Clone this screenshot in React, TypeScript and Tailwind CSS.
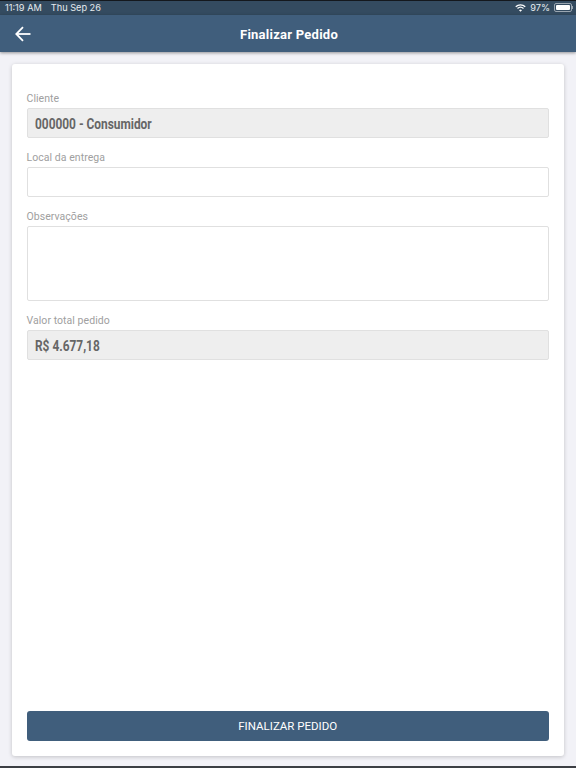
const font = { fontFamily: "Roboto, sans-serif" }

function Field({ label, value, readOnly, area }: { label: string, value?: string, readOnly?: boolean, area?: boolean }) {
  return (
    <div className="flex flex-col">
      <label className="h-[20px] pt-[1px] text-[10.5px] leading-[20px] text-[#a0a0a0] tracking-[0.05px]">{label}</label>
      <div className={`${area ? "h-[75px]" : "h-[30px]"} ${readOnly ? "bg-[#eeeeee]" : "bg-white"} border border-[#e0e0e0] rounded-[2px] px-[7.5px] pt-[3px] flex items-center text-[14.5px] font-bold text-[#666666]`}>
        <span className="inline-block origin-left scale-x-[0.82] whitespace-nowrap">{value}</span>
      </div>
    </div>
  )
}

function App() {
  return (
    <div className="w-[576px] h-[768px] flex flex-col bg-[#f2f2f7] overflow-hidden" style={font}>
      <div className="h-[15px] shrink-0 bg-[#344b60] border-t border-[#14181d] flex items-center justify-between pl-[5px] pr-[3px] text-[9.2px] text-[#e6ebef]" style={{ fontFamily: "Inter, sans-serif" }}>
        <div className="flex gap-[9px]">
          <span>11:19 AM</span>
          <span>Thu Sep 26</span>
        </div>
        <div className="flex items-center gap-[4px]">
          <svg width="11" height="8" viewBox="0 0 22 16" fill="none" stroke="white" strokeWidth="2.6">
            <path d="M1.5 5.5a14 14 0 0 1 19 0" />
            <path d="M5 9a9 9 0 0 1 12 0" />
            <path d="M11 15.5l-3-3.2a4.4 4.4 0 0 1 6 0z" fill="white" stroke="none" />
          </svg>
          <span>97%</span>
          <div className="flex items-center">
            <div className="w-[18px] h-[9px] rounded-[2px] border border-[#9aa6b1] p-[1px]">
              <div className="w-full h-full bg-white rounded-[1px]" />
            </div>
            <div className="w-[1px] h-[3px] bg-[#9aa6b1]" />
          </div>
        </div>
      </div>
      <div className="h-[37px] shrink-0 bg-[#405e7c] shadow-[0_1px_3px_rgba(0,0,0,0.4)] relative flex items-center justify-center pt-[2px]">
        <svg className="absolute left-[15px] top-[11px]" width="16" height="16" viewBox="0 0 16 16" fill="none" stroke="white" strokeWidth="1.8">
          <path d="M15.5 8H1.5" />
          <path d="M8 1.2L1.3 8 8 14.8" />
        </svg>
        <span className="text-[13px] font-bold text-white tracking-[0.25px] ml-[2px]">Finalizar Pedido</span>
      </div>
      <div className="flex-1 flex flex-col px-[12px] pt-[12px] pb-[10px]">
        <div className="flex-1 bg-white rounded-[3px] shadow-[0_1px_4px_rgba(0,0,0,0.2)] pl-[14.5px] pr-[15px] pt-[24px] pb-[15px] flex flex-col justify-between">
          <div className="flex flex-col gap-[9px]">
            <Field label="Cliente" value="000000 - Consumidor" readOnly />
            <Field label="Local da entrega" />
            <Field label="Observações" area />
            <Field label="Valor total pedido" value="R$ 4.677,18" readOnly />
          </div>
          <button className="h-[30px] w-full pt-[1px] bg-[#405e7c] rounded-[3px] text-[11.5px] text-white">FINALIZAR PEDIDO</button>
        </div>
      </div>
      <div className="h-[2px] shrink-0 bg-[#3c3f44]" />
    </div>
  )
}

export default App;
